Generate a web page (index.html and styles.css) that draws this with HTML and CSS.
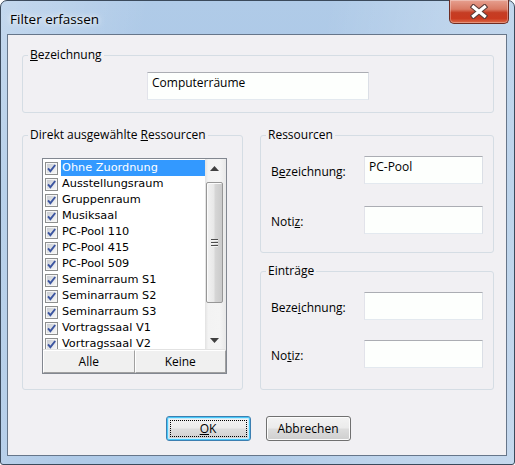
FILE: index.html
```html
<!DOCTYPE html>
<html lang="de">
<head>
<meta charset="utf-8">
<title>Filter erfassen</title>
<link rel="stylesheet" href="styles.css">
</head>
<body>
<svg class="defs" width="0" height="0" aria-hidden="true">
  <defs>
    <linearGradient id="cbg" x1="0" y1="0" x2="1" y2="1">
      <stop offset="0" stop-color="#c9ccd2"/>
      <stop offset="1" stop-color="#f7f7f7"/>
    </linearGradient>
    <symbol id="chk" viewBox="0 0 13 13">
      <rect x="0.5" y="0.5" width="12" height="12" fill="#f6f6f6" stroke="#8e8f8f"/>
      <rect x="2" y="2" width="9" height="9" fill="url(#cbg)"/>
      <path d="M3 6.3 L5.4 9.2 L10.2 3" fill="none" stroke="#3c55a0" stroke-width="1.9"/>
    </symbol>
  </defs>
</svg>
<div class="window">
  <div class="titlebar">
    <span class="title">Filter erfassen</span>
    <div class="close">
      <svg width="18" height="15" viewBox="0 0 18 15">
        <path d="M3.5 3 L14.5 12 M14.5 3 L3.5 12" stroke="#5a3c38" stroke-width="5.4" stroke-linecap="square"/>
        <path d="M3.5 3 L14.5 12 M14.5 3 L3.5 12" stroke="#ffffff" stroke-width="3.2" stroke-linecap="square"/>
      </svg>
    </div>
  </div>
  <div class="client">
    <fieldset class="group g-name">
      <legend><u>B</u>ezeichnung</legend>
      <div class="name-body">
        <div class="textbox wide">Computerräume</div>
      </div>
    </fieldset>

    <div class="middle">
      <fieldset class="group g-list">
        <legend>Direkt ausgewählte <u>R</u>essourcen</legend>
        <div class="list-body">
          <div class="listwrap">
            <div class="list">
              <div class="items">
                <div class="item"><svg class="cb"><use href="#chk"/></svg><span class="sel">Ohne Zuordnung</span></div>
                <div class="item"><svg class="cb"><use href="#chk"/></svg><span>Ausstellungsraum</span></div>
                <div class="item"><svg class="cb"><use href="#chk"/></svg><span>Gruppenraum</span></div>
                <div class="item"><svg class="cb"><use href="#chk"/></svg><span>Musiksaal</span></div>
                <div class="item"><svg class="cb"><use href="#chk"/></svg><span>PC-Pool 110</span></div>
                <div class="item"><svg class="cb"><use href="#chk"/></svg><span>PC-Pool 415</span></div>
                <div class="item"><svg class="cb"><use href="#chk"/></svg><span>PC-Pool 509</span></div>
                <div class="item"><svg class="cb"><use href="#chk"/></svg><span>Seminarraum S1</span></div>
                <div class="item"><svg class="cb"><use href="#chk"/></svg><span>Seminarraum S2</span></div>
                <div class="item"><svg class="cb"><use href="#chk"/></svg><span>Seminarraum S3</span></div>
                <div class="item"><svg class="cb"><use href="#chk"/></svg><span>Vortragssaal V1</span></div>
                <div class="item"><svg class="cb"><use href="#chk"/></svg><span>Vortragssaal V2</span></div>
              </div>
              <div class="scrollbar">
                <div class="arrow"><svg width="9" height="5" viewBox="0 0 9 5"><path d="M0 5 L4.5 0 L9 5 Z" fill="#404040"/></svg></div>
                <div class="track">
                  <div class="thumb">
                    <div class="grip"><i></i><i></i><i></i></div>
                  </div>
                </div>
                <div class="arrow"><svg width="9" height="5" viewBox="0 0 9 5"><path d="M0 0 L9 0 L4.5 5 Z" fill="#404040"/></svg></div>
              </div>
            </div>
            <div class="listbtns">
              <div class="lbtn">Alle</div>
              <div class="lbtn">Keine</div>
            </div>
          </div>
        </div>
      </fieldset>

      <div class="rightcol">
        <fieldset class="group g-res">
          <legend>Ressourcen</legend>
          <div class="form-body res-body">
            <div class="row"><span class="lbl">B<u>e</u>zeichnung:</span><div class="textbox">PC-Pool</div></div>
            <div class="row"><span class="lbl">Noti<u>z</u>:</span><div class="textbox"></div></div>
          </div>
        </fieldset>
        <fieldset class="group g-ent">
          <legend>Einträge</legend>
          <div class="form-body ent-body">
            <div class="row"><span class="lbl">Beze<u>i</u>chnung:</span><div class="textbox"></div></div>
            <div class="row"><span class="lbl">No<u>t</u>iz:</span><div class="textbox"></div></div>
          </div>
        </fieldset>
      </div>
    </div>

    <div class="buttons">
      <div class="btn default"><span class="focus"><u>O</u>K</span></div>
      <div class="btn">Abbrechen</div>
    </div>
  </div>
</div>
</body>
</html>
```

FILE: styles.css
```css
html, body {
  margin: 0;
  padding: 0;
  background: #ffffff;
}

.defs {
  display: block;
  width: 0;
  height: 0;
  overflow: hidden;
}

.window {
  width: 515px;
  height: 465px;
  box-sizing: border-box;
  border: 1px solid #3b4a5c;
  border-radius: 7px 7px 3px 3px;
  background:
    linear-gradient(100deg, rgba(255,255,255,0.25) 0%, rgba(255,255,255,0) 25%, rgba(255,255,255,0) 55%, rgba(255,255,255,0.18) 75%, rgba(255,255,255,0.28) 100%),
    linear-gradient(180deg, #b0cbe8 0%, #a8c6e5 40%, #afcae7 100%);
  display: flex;
  flex-direction: column;
  padding: 0 7px 8px 6px;
  font-family: "Open Sans", "Noto Sans", sans-serif;
  font-size: 12px;
  color: #000;
}

.titlebar {
  height: 33px;
  flex: none;
  margin: 0 -7px 0 -6px;
  padding: 0 5px 0 9px;
  display: flex;
  align-items: flex-start;
}

.title {
  font-size: 13.5px;
  line-height: 18px;
  margin-top: 9px;
  color: #000;
  text-shadow: 0 0 8px rgba(255,255,255,0.9), 0 0 4px rgba(255,255,255,0.9);
}

.close {
  margin-left: auto;
  margin-top: -1px;
  width: 60px;
  height: 24px;
  box-sizing: border-box;
  border: 1px solid #6e2c22;
  border-top: none;
  border-radius: 0 0 5px 5px;
  background: linear-gradient(180deg, #e6a090 0%, #d97a64 40%, #c53d24 55%, #c9391f 80%, #dc6a48 100%);
  box-shadow: inset 0 0 0 1px rgba(255,255,255,0.3);
  display: flex;
  align-items: center;
  justify-content: center;
}

.client {
  flex: 1;
  border: 1px solid #66768a;
  background: #f1f0f3;
  padding: 0 12px 0 14px;
  display: flex;
  flex-direction: column;
}

.group {
  margin: 0;
  padding: 0;
  border: 1px solid #d5dde4;
  border-radius: 3px;
  min-width: 0;
}

.group legend {
  padding: 0 2px;
  margin-left: 5px;
  line-height: 16px;
  font-size: 12px;
}

.g-name {
  margin-top: 12px;
}

.name-body {
  padding: 9px 0 12px 124px;
}

.textbox {
  box-sizing: border-box;
  height: 28px;
  width: 119px;
  border: 1px solid;
  border-color: #abadb3 #dbdfe6 #e3e9ef #e2e3ea;
  background: #fdfffd;
  padding: 2px 4px;
  line-height: 16px;
  font-size: 12px;
}

.textbox.wide {
  width: 222px;
}

.middle {
  margin-top: 14px;
  display: flex;
  gap: 17px;
}

.g-list {
  width: 221px;
  box-sizing: border-box;
}

.list-body {
  padding: 15px 15px 15px 19px;
}

.listwrap {
  width: 185px;
  box-sizing: border-box;
  border: 1px solid #828790;
  display: flex;
  flex-direction: column;
  background: #fff;
}

.list {
  height: 191px;
  display: flex;
  overflow: hidden;
  border-bottom: 1px solid #e2e2e2;
  box-sizing: border-box;
}

.items {
  flex: 1;
  padding-top: 1px;
  overflow: hidden;
  font-family: "DejaVu Sans", sans-serif;
  font-size: 11.3px;
}

.item {
  height: 16px;
  display: flex;
  align-items: center;
  padding-left: 2px;
}

.cb {
  width: 13px;
  height: 13px;
  flex: none;
  margin-right: 3px;
}

.item span {
  flex: 1;
  line-height: 16px;
  padding-left: 1px;
  white-space: nowrap;
}

.item span.sel {
  background: #3399ff;
  color: #fff;
}

.scrollbar {
  width: 21px;
  flex: none;
  display: flex;
  flex-direction: column;
  background: linear-gradient(90deg, #e2e2e2 0%, #f3f3f3 15%, #f4f4f4 70%, #e8e8e8 100%);
}

.arrow {
  height: 18px;
  display: flex;
  align-items: center;
  justify-content: center;
  padding-right: 2px;
}

.track {
  flex: 1;
  padding: 5px 3px 0 1px;
}

.thumb {
  height: 121px;
  box-sizing: border-box;
  border: 1px solid #979797;
  border-radius: 2px;
  background: linear-gradient(90deg, #f2f2f2 0%, #e8e8e8 45%, #d6d6d6 55%, #cacaca 100%);
  box-shadow: inset 1px 1px 0 #fbfbfb;
  display: flex;
  align-items: center;
  justify-content: center;
}

.grip {
  display: flex;
  flex-direction: column;
  gap: 1px;
}

.grip i {
  display: block;
  width: 7px;
  height: 1px;
  background: #4d4d4d;
  border-bottom: 1px solid #f4f4f4;
}

.listbtns {
  display: grid;
  grid-template-columns: 1fr 1fr;
  height: 23px;
}

.lbtn {
  box-sizing: border-box;
  border: 1px solid;
  border-color: #ffffff #a0a0a0 #a0a0a0 #ffffff;
  background: #f0f0f0;
  display: flex;
  align-items: center;
  justify-content: center;
  font-size: 12px;
}

.rightcol {
  width: 234px;
  display: flex;
  flex-direction: column;
  gap: 10px;
}

.form-body {
  display: flex;
  flex-direction: column;
  padding: 13px 10px 18px 10px;
}

.res-body {
  gap: 22px;
  padding-bottom: 18px;
}

.ent-body {
  gap: 20px;
  padding-bottom: 21px;
}

.row {
  display: flex;
  align-items: center;
  justify-content: space-between;
}

.lbl {
  padding-top: 3px;
  line-height: 16px;
}

.buttons {
  margin-top: 26px;
  display: flex;
  justify-content: center;
  gap: 15px;
}

.btn {
  width: 85px;
  height: 25px;
  box-sizing: border-box;
  border: 1px solid #707070;
  border-radius: 3px;
  background: linear-gradient(180deg, #f3f3f3 0%, #ebebeb 48%, #dddddd 52%, #cfcfcf 100%);
  box-shadow: inset 0 0 0 1px #fcfcfc;
  display: flex;
  align-items: center;
  justify-content: center;
  font-size: 12px;
  line-height: 16px;
}

.btn.default {
  border-color: #3c7fb1;
  box-shadow: inset 0 0 0 1px #48c8f8, inset 0 0 0 2px #c6ecfc;
  padding: 3px;
}

.focus {
  flex: 1;
  align-self: stretch;
  border: 1px dotted #000;
  display: flex;
  align-items: center;
  justify-content: center;
}
```
